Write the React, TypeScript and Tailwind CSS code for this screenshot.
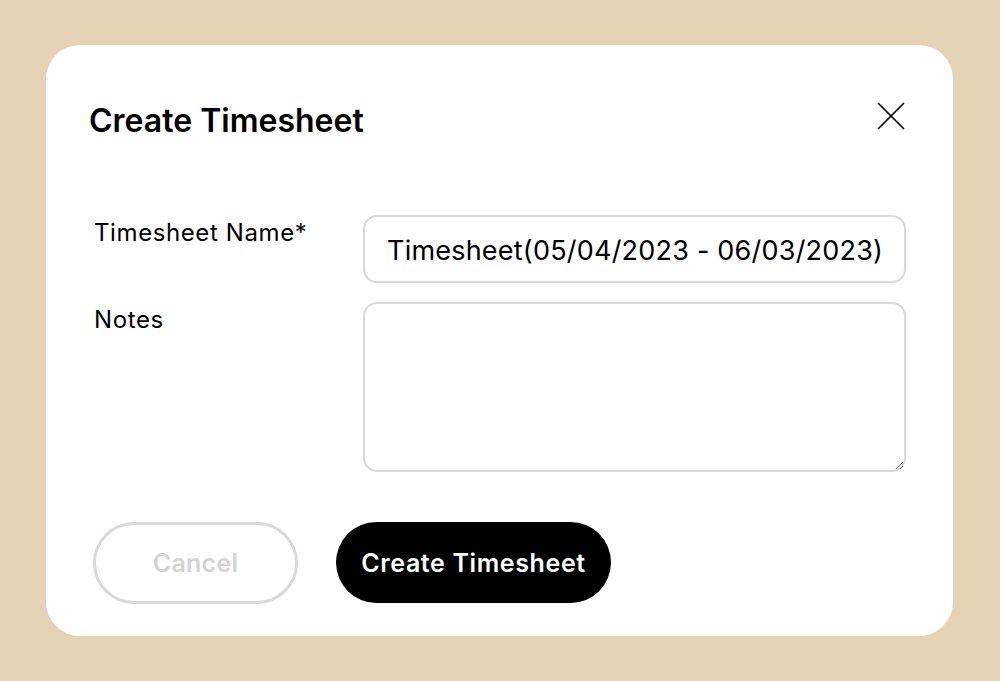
import React from "react";

export default function App() {
  return (
    <div
      className="h-[681px] w-[1000px] bg-[#e6d2b5] pt-[45px] pb-[45px] pl-[46px] pr-[47px]"
      style={{ fontFamily: "Inter, 'Noto Sans', sans-serif" }}
    >
      <div className="flex h-full flex-col rounded-[34px] bg-white pl-[43px] pr-[47px] pt-[56px]">
        {/* header */}
        <div className="flex items-center justify-between">
          <h2 className="text-[32px] leading-[40px] font-semibold text-black">Create Timesheet</h2>
          <button className="mb-[10px] flex h-[30px] w-[30px] items-center justify-center text-black">
            <svg width="30" height="30" viewBox="0 0 30 30" fill="none" stroke="currentColor" strokeWidth="1.7">
              <path d="M2 2 L28 28 M28 2 L2 28" />
            </svg>
          </button>
        </div>

        {/* form */}
        <div className="mt-[74px] grid grid-cols-[269px_1fr] gap-y-[19px] pl-[5px]">
          <label className="pt-[2px] text-[24px] leading-[32px] tracking-[0.025em] text-black">Timesheet Name*</label>
          <input
            defaultValue="Timesheet(05/04/2023 - 06/03/2023)"
            className="h-[68px] w-full rounded-[14px] border-2 border-[#d9d9d9] pl-[22px] pr-[6px] pt-[2px] text-[27px] tracking-[0.008em] text-black outline-none"
          />
          <label className="pt-[2px] text-[24px] leading-[32px] tracking-[0.025em] text-black">Notes</label>
          <textarea className="h-[170px] w-full resize-y rounded-[14px] border-2 border-[#d9d9d9] px-[22px] py-[12px] text-[22px] outline-none" />
        </div>

        {/* actions */}
        <div className="mt-[50px] flex gap-[38px] pl-[4px]">
          <button className="h-[82px] w-[205px] rounded-full border-[3px] border-[#d9d9d9] pt-[2px] text-[25px] font-semibold tracking-[0.01em] text-[#d4d4d4]">
            Cancel
          </button>
          <button className="h-[81px] w-[275px] rounded-full bg-black pt-[2px] text-[25px] font-semibold tracking-[0.025em] text-white">
            Create Timesheet
          </button>
        </div>
      </div>
    </div>
  );
}
